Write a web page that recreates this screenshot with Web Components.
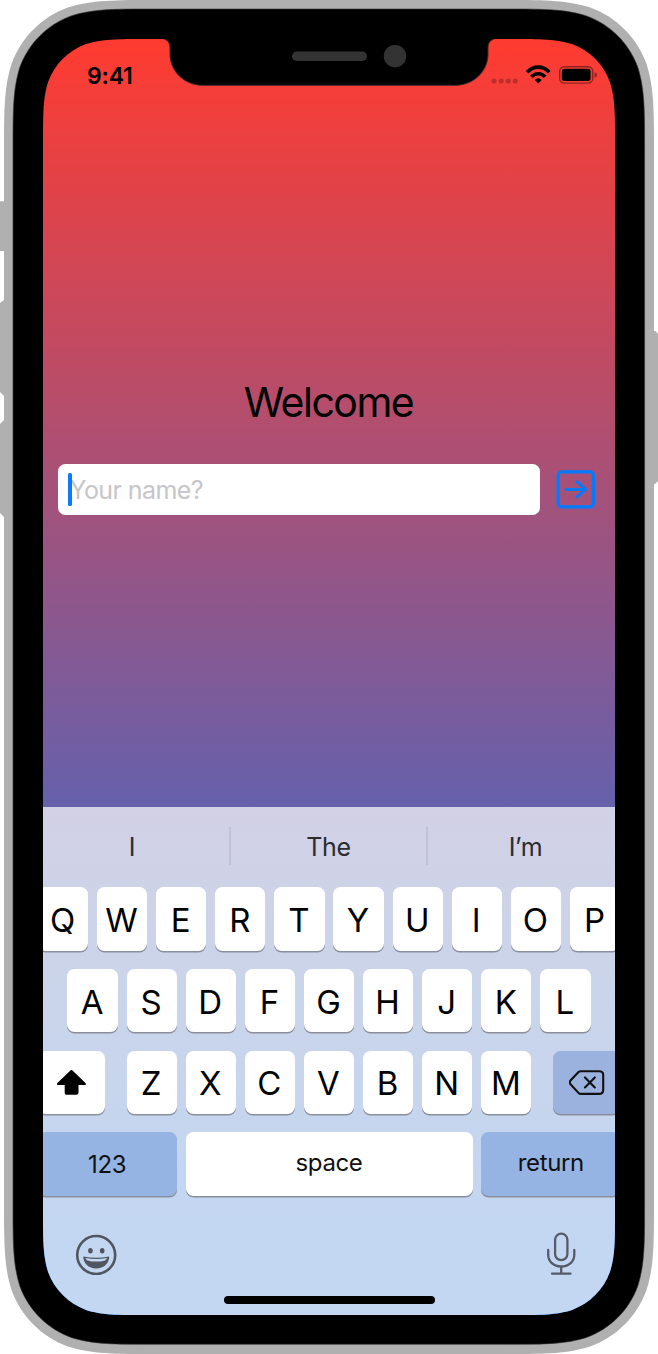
<!DOCTYPE html>
<html lang="en">
<head>
<meta charset="utf-8">
<title>Welcome</title>
<style>
html, body { margin: 0; background: #fff; }
body { font-family: Inter, "Liberation Sans", sans-serif; color: #000; width: 658px; height: 1354px; overflow: hidden; }
</style>
</head>
<body>
<phone-frame>
  <status-bar slot="status"></status-bar>
  <welcome-screen></welcome-screen>
  <key-board></key-board>
</phone-frame>
<script>
const define = (name, html, setup) => {
  const template = document.createElement('template');
  template.innerHTML = html;
  customElements.define(name, class extends HTMLElement {
    constructor() {
      super();
      this.attachShadow({ mode: 'open' }).append(template.content.cloneNode(true));
      if (setup) setup(this);
    }
  });
};

/* Rounded rectangle with continuous-curvature corners. */
const squircle = (x, y, w, h, r) => {
  const a = 1.5287 * r, b = 1.0885 * r, c = .8685 * r, d = .6315 * r, e = .0749 * r, f = .3728 * r, g = .1691 * r;
  const X = x + w, Y = y + h;
  return `M${x + a} ${y}H${X - a}C${X - b} ${y} ${X - c} ${y} ${X - d} ${y + e}C${X - f} ${y + g} ${X - g} ${y + f} ${X - e} ${y + d}C${X} ${y + c} ${X} ${y + b} ${X} ${y + a}` +
    `V${Y - a}C${X} ${Y - b} ${X} ${Y - c} ${X - e} ${Y - d}C${X - g} ${Y - f} ${X - f} ${Y - g} ${X - d} ${Y - e}C${X - c} ${Y} ${X - b} ${Y} ${X - a} ${Y}` +
    `H${x + a}C${x + b} ${Y} ${x + c} ${Y} ${x + d} ${Y - e}C${x + f} ${Y - g} ${x + g} ${Y - f} ${x + e} ${Y - d}C${x} ${Y - c} ${x} ${Y - b} ${x} ${Y - a}` +
    `V${y + a}C${x} ${y + b} ${x} ${y + c} ${x + e} ${y + d}C${x + g} ${y + f} ${x + f} ${y + g} ${x + d} ${y + e}C${x + c} ${y} ${x + b} ${y} ${x + a} ${y}Z`;
};

define('phone-frame', `
<style>
:host { display: grid; width: 658px; height: 1354px; box-sizing: border-box; padding: 39px 43px; position: relative; }
.case { position: absolute; inset: 0; }
.screen { position: relative; width: 572px; height: 1276px; display: flex; flex-direction: column;
  background: linear-gradient(#ff3b30, #007aff); clip-path: path('${squircle(0, 0, 572, 1276, 68)}'); }
.notch { position: absolute; left: 117px; top: 0; }
</style>
<svg class="case" width="658" height="1354">
  <g fill="#b0b0b0">
    <path d="M0 201.3H6V251H0zM0 303L4 300H8V396H4L0 392zM0 424L4 420H8V517H4L0 513zM650 331H655.5L658 334V481L655 484H650z"/>
    <path d="${squircle(4, 0, 650, 1354, 101)}"/>
  </g>
  <path fill="#000" stroke="#333" stroke-width=".6" d="${squircle(13, 9, 631.6, 1335.3, 92)}"/>
</svg>
<div class="screen">
  <slot name="status"></slot>
  <slot></slot>
  <svg class="notch" width="338" height="48">
    <path fill="#000" stroke="#3a2a2a" stroke-width="1" d="M0-1C7 0 10 3 10 9V15C10 32 24 46.300 43 46.300H295C314 46.300 328 32 328 15V9C328 3 331 0 338-1Z"/>
    <rect x="132" y="12.500" width="75" height="9.500" rx="4.700" fill="#333"/>
    <circle cx="235" cy="17.200" r="11.200" fill="#333"/>
  </svg>
</div>`);

define('status-bar', `
<style>
:host { display: flex; height: 72px; box-sizing: border-box; padding: 22px 17px 0 44px; justify-content: space-between; align-items: flex-start; }
time { font-size: 23px; font-weight: 600; line-height: 29px; letter-spacing: -.2px; margin-top: 1px; }
svg { display: block; margin-top: 2px; }
</style>
<time>9:41</time>
<svg width="107" height="24" viewBox="491 63 107 24">
  <g fill="#000" fill-opacity=".24"><circle cx="494" cy="81" r="2.500"/><circle cx="501.200" cy="81" r="2.500"/><circle cx="508.200" cy="81" r="2.500"/><circle cx="515.200" cy="81" r="2.500"/></g>
  <g fill="none" stroke="#000" stroke-width="3.700"><path d="M527.200 72.200C533.200 65.400 543.200 65.400 549.200 72.200"/><path d="M531.500 76.900C535 72.700 541.500 72.700 545 76.900"/></g>
  <path d="M534.800 79.900Q538.200 76.400 541.600 79.900L538.200 83.500Z"/>
  <rect x="559.700" y="66.700" width="33" height="16.400" rx="4.500" fill="none" stroke="#000" stroke-opacity=".42" stroke-width="1.400"/>
  <rect x="561.800" y="68.800" width="28.800" height="12.200" rx="2.300"/>
  <path fill-opacity=".42" d="M594.500 72.300Q597 73 597 75Q597 77 594.500 77.600Z"/>
</svg>`);

define('welcome-screen', `
<style>
:host { display: flex; flex-direction: column; height: 695.500px; box-sizing: border-box; padding: 265px 15px 0; }
h1 { margin: 0; font-size: 41px; line-height: 52px; font-weight: 400; text-align: center; letter-spacing: -1.500px; padding-right: 1px; }
form { display: flex; gap: 15px; align-items: center; margin-top: 35.500px; }
</style>
<h1>Welcome</h1>
<form><name-field></name-field><submit-button></submit-button></form>`);

define('name-field', `
<style>
:host { display: flex; align-items: center; width: 481.500px; height: 51.500px; box-sizing: border-box; padding-left: 10px; border-radius: 7.500px; background: #fff; }
i { width: 3.500px; height: 33px; border-radius: 1.500px; background: #0a7aff; z-index: 1; }
span { color: #c6c6c8; font-size: 25px; line-height: 32px; margin-left: -2px; margin-top: 1px; letter-spacing: -.6px; }
</style><i></i><span>Your name?</span>`);

define('submit-button', `
<style>:host { display: block; } svg { display: block; }</style>
<svg width="42" height="42" fill="none" stroke="#007aff" stroke-width="3.300" stroke-linecap="round" stroke-linejoin="round">
  <rect x="3.200" y="3.800" width="35.200" height="35" rx="3.500"/><path d="M11 21.400H30.500M22 13.900L30.500 21.400L22 28.900" stroke-width="3"/>
</svg>`);

define('key-cap', `
<style>
:host { display: flex; flex: none; width: 50.300px; height: 63.500px; border-radius: 7.500px; background: #fff; box-shadow: 0 1.500px 0 #8b8e9c; align-items: center; justify-content: center; font-size: 33px; line-height: 40px; box-sizing: border-box; padding-top: 2px; padding-right: 1px; }
:host([kind=fn]) { background: #95b4e4; }
:host([kind=del]) { background: #9bb2df; }
:host([kind]) { font-size: 24px; color: #111; letter-spacing: -.35px; padding-right: 0; }
:host([wide=half]) { width: 66.800px; padding-right: 0; }
:host([wide=fn]) { width: 139px; }
:host([wide=space]) { width: 287px; }
:host([raised]) { padding: 0 0 2px; }
</style><slot></slot>`);

define('key-row', `
<style>:host { display: flex; justify-content: center; gap: 8.820px; height: 81.800px; } </style><slot></slot>`);

define('key-board', `
<style>
:host { display: block; height: 508.500px; overflow: hidden; background: linear-gradient(#d2d1e6, #cbd4e9 32%, #c4d6f0 72%, #c3d7f3); }
.hints { display: grid; grid-template-columns: 186px 197px 1fr; height: 80.500px; align-items: center; }
.hints span { font-size: 25px; line-height: 36px; color: #2b2b30; text-align: center; letter-spacing: -.4px; margin-top: -2.500px; box-sizing: border-box; padding-top: 2px; }
.hints span + span { border-left: 2px solid #c1c2d4; }
.hints span:first-child { padding-right: 8px; }
.hints span:last-child { padding-left: 8px; }
.gap { display: flex; margin: 0 12.900px; gap: 8.820px; }
.bottom { display: flex; justify-content: space-between; padding: 17px 32px 0; }
svg { display: block; }
.home { width: 211px; height: 8px; border-radius: 4px; background: #000; margin: 21px auto 0; }
</style>
<div class="hints"><span>I</span><span>The</span><span>I’m</span></div>
<key-row id="r1"></key-row>
<key-row id="r2"></key-row>
<key-row>
  <key-cap wide="half"><svg width="30" height="26" viewBox="56.500 1070.500 30 26"><path d="M71.900 1070.500Q72.500 1070.500 73 1071L86 1083.500Q87 1085.200 85.500 1085.500H79V1093.300Q79 1095.200 77 1095.200H67Q65.200 1095.200 65.200 1093.300V1085.500H58.500Q56.700 1085.200 57.900 1083.500L70.900 1071Q71.300 1070.500 71.900 1070.500Z"/></svg></key-cap>
  <div class="gap" id="r3"></div>
  <key-cap kind="del" wide="half"><svg width="36" height="26" viewBox="569 1070.300 36 26" fill="none" stroke="#111" stroke-width="2.100" stroke-linejoin="round" stroke-linecap="round"><path d="M581 1071.500H599Q603.200 1071.500 603.200 1075V1090Q603.200 1094.200 599 1094.200H581Q579.500 1094.200 578.500 1093.200L570.500 1084.500Q569 1082.600 570.500 1080.800L578.500 1072.300Q579.500 1071.500 581 1071.500ZM585 1077.700L594.800 1087.700M594.800 1077.700L585 1087.700"/></svg></key-cap>
</key-row>
<key-row>
  <key-cap kind="fn" wide="fn">123</key-cap><key-cap kind="white" wide="space" raised>space</key-cap><key-cap kind="fn" wide="fn" raised>return</key-cap>
</key-row>
<div class="bottom">
  <svg width="44" height="44" viewBox="74.500 1230.500 44 44"><circle cx="95.700" cy="1254.500" r="19" fill="none" stroke="#50565f" stroke-width="2.600"/><g fill="#50565f" transform="translate(-.5 -.3)"><ellipse cx="90.400" cy="1250.600" rx="2.300" ry="2.700"/><ellipse cx="102.200" cy="1250.600" rx="2.300" ry="2.700"/><path fill-rule="evenodd" d="M83.300 1256.300Q96.200 1259 109.200 1256.300C109.200 1263 104 1268.200 96.200 1268.200C88.500 1268.200 83.300 1263 83.300 1256.300ZM85.500 1257.900Q86 1259.500 87.500 1260.200Q96.200 1262.600 105 1260.200Q106.500 1259.500 107 1257.900Q96.200 1259.900 85.500 1257.900Z"/></g></svg>
  <svg width="44" height="44" viewBox="539 1230.500 44 44" fill="none" stroke="#555b66" stroke-width="2.300" stroke-linecap="round"><rect x="555.100" y="1233.200" width="12.300" height="26.500" rx="6.150"/><path d="M548.200 1249.500V1254C548.200 1261 553.500 1266 561.200 1266C569 1266 574.300 1261 574.300 1254V1249.500M561.200 1266V1273M552 1273.200H570.500"/></svg>
</div>
<div class="home"></div>`, host => {
  const rows = { r1: 'QWERTYUIOP', r2: 'ASDFGHJKL', r3: 'ZXCVBNM' };
  for (const [id, letters] of Object.entries(rows)) {
    const row = host.shadowRoot.getElementById(id);
    for (const letter of letters) {
      const key = document.createElement('key-cap');
      key.textContent = letter;
      row.append(key);
    }
  }
});
</script>
</body>
</html>
